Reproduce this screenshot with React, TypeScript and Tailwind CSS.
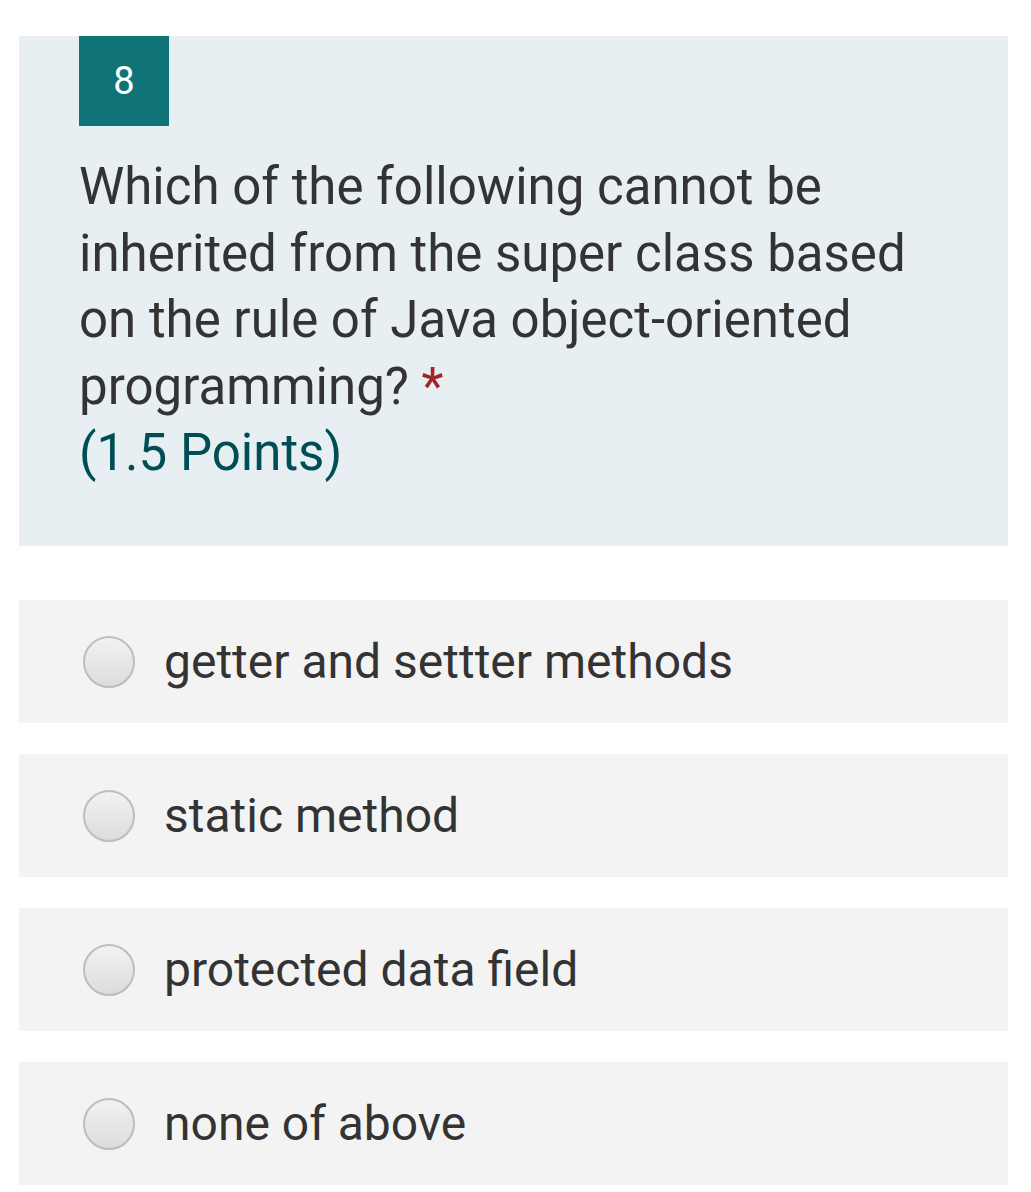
import React from 'react';

const options = [
  'getter and settter methods',
  'static method',
  'protected data field',
  'none of above',
];

const Radio = () => (
  <span className="block h-[52px] w-[52px] shrink-0 rounded-full border-2 border-[#bdbdbd] bg-gradient-to-b from-[#f2f2f2] to-[#dcdcdc]" />
);

export default function App() {
  return (
    <div className="min-h-[1192px] w-[1031px] bg-white pt-[36px] font-['Roboto',sans-serif]">
      <div className="ml-[19px] mr-[23px] h-[510px] bg-[#e7eff2] pl-[60px] pr-[68px]">
        <div className="flex h-[90px] w-[90px] items-center justify-center bg-[#0f7377] text-[38px] text-white">
          8
        </div>
        <div className="mt-[28px] text-[51px] leading-[66.5px] text-[#333333]">
          Which of the following cannot be inherited from the super class based on the rule of Java object-oriented
          programming? <span className="text-[#a4262c]">*</span>
          <div className="text-[#004e55]">(1.5 Points)</div>
        </div>
      </div>

      <div className="mt-[54px] ml-[19px] mr-[23px] flex flex-col gap-[31px]">
        {options.map((o) => (
          <div key={o} className="flex h-[123px] items-center bg-[#f3f3f3] pl-[64px]">
            <Radio />
            <span className="ml-[29px] text-[48px] text-[#333333]">{o}</span>
          </div>
        ))}
      </div>
    </div>
  );
}
